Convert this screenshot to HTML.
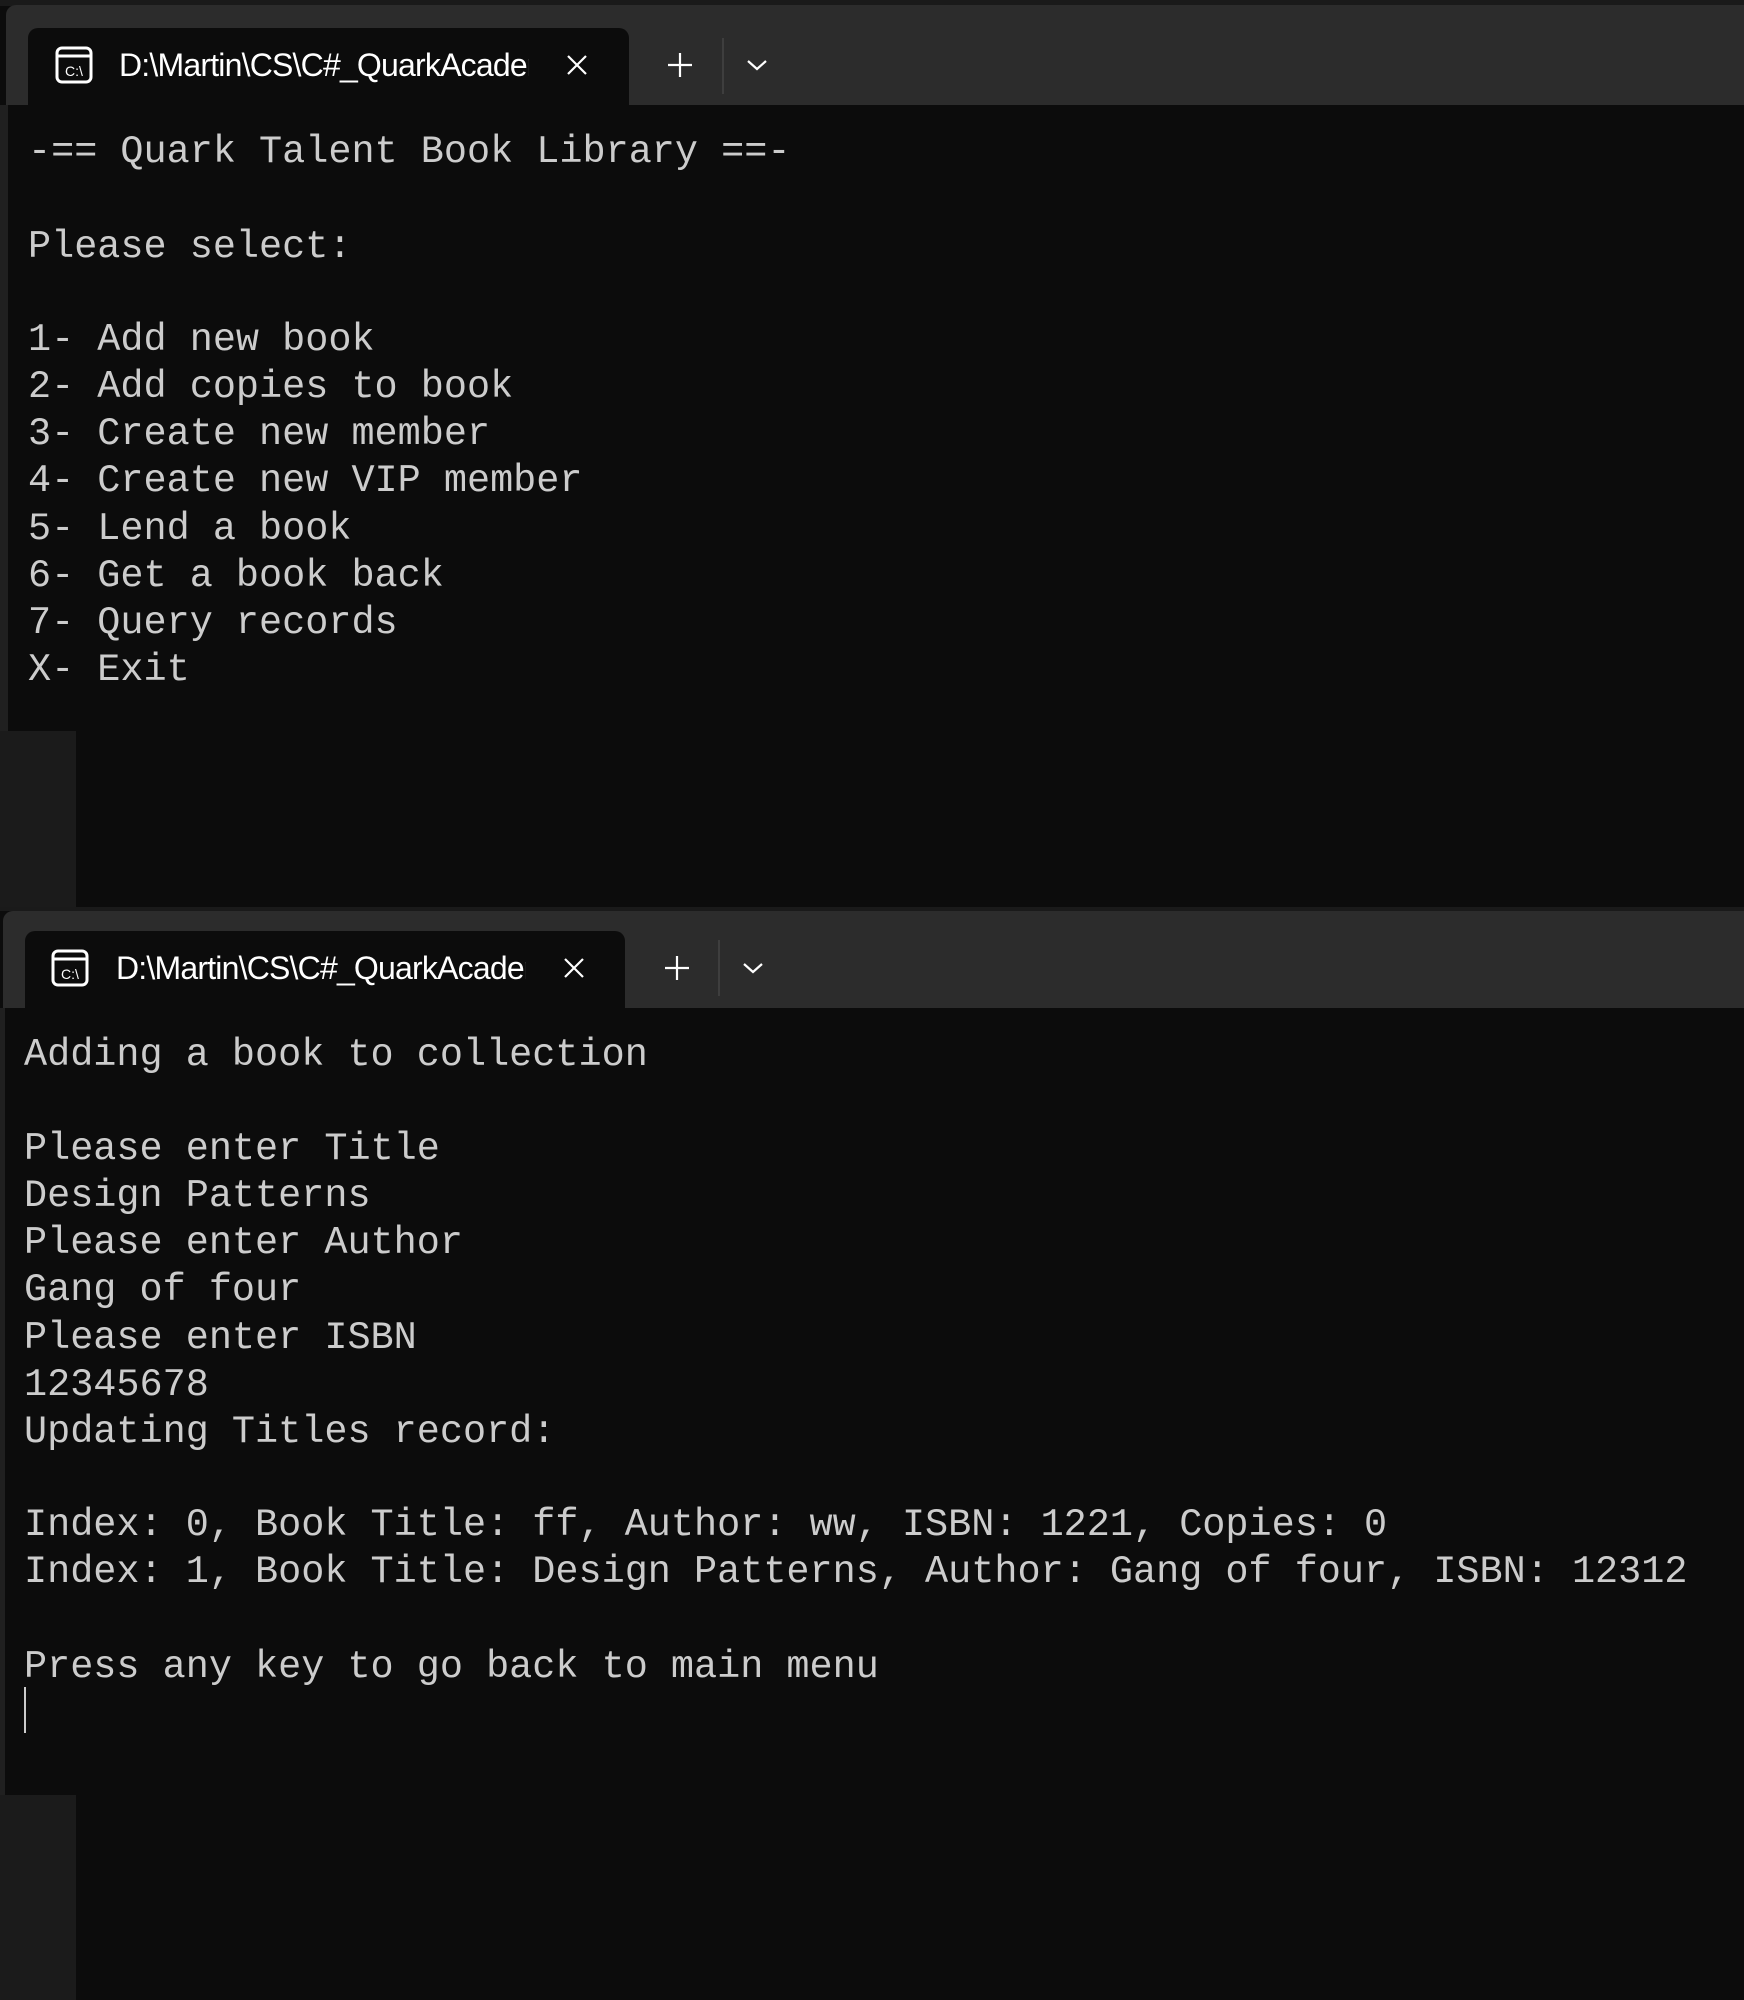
<!DOCTYPE html>
<html><head><style>
html,body{margin:0;padding:0;background:#0c0c0c;width:1744px;height:2000px;overflow:hidden;position:relative}
.abs{position:absolute}
.bar{position:absolute;left:6px;right:0;background:#2c2c2c;border-top-left-radius:10px}
.tab{position:absolute;background:#0c0c0c;border-top-left-radius:10px;border-top-right-radius:10px}
.tt{position:absolute;font-family:"Liberation Sans",sans-serif;font-size:32px;color:#fff;white-space:nowrap;letter-spacing:-0.8px}
.t{position:absolute;font-family:"Liberation Mono",monospace;font-size:38.5px;color:#cccccc;white-space:pre;line-height:47px;height:47px}
</style></head><body>
<!-- top window -->
<div class="abs" style="left:0;top:0;width:1744px;height:6px;background:#1a1a1a"></div>
<div class="bar" style="top:5px;height:100px"></div>
<div class="tab" style="left:28px;top:28px;width:601px;height:78px"></div>
<svg class="abs" style="left:55px;top:46px" width="38" height="38" viewBox="0 0 38 38"><rect x="2" y="2" width="34" height="34" rx="5" fill="none" stroke="#fff" stroke-width="3"/><line x1="2" y1="10" x2="36" y2="10" stroke="#fff" stroke-width="3"/><text x="19" y="30" font-family="Liberation Sans" font-size="14" fill="#fff" text-anchor="middle">C:\</text></svg>
<div class="tt" style="left:119px;top:47px;width:410px;overflow:hidden">D:\Martin\CS\C#_QuarkAcademy</div>
<svg class="abs" style="left:565px;top:53px" width="24" height="24"><path d="M3 3L21 21M21 3L3 21" stroke="#fff" stroke-width="2.2"/></svg>
<svg class="abs" style="left:667px;top:52px" width="26" height="26"><path d="M13 1V25M1 13H25" stroke="#fff" stroke-width="2.2"/></svg>
<div class="abs" style="left:722px;top:38px;width:2px;height:56px;background:#3e3e3e"></div>
<svg class="abs" style="left:746px;top:58px" width="22" height="14"><path d="M2 3L11 11L20 3" stroke="#fff" stroke-width="2.2" fill="none"/></svg>
<div class="abs" style="left:0;top:105px;width:8px;height:626px;background:#202020"></div>
<div class="abs" style="left:0;top:731px;width:76px;height:178px;background:#1b1b1b"></div>
<div class="t" style="left:28px;top:129px">-== Quark Talent Book Library ==-</div>
<div class="t" style="left:28px;top:224px">Please select:</div>
<div class="t" style="left:28px;top:317px">1- Add new book</div>
<div class="t" style="left:28px;top:364px">2- Add copies to book</div>
<div class="t" style="left:28px;top:411px">3- Create new member</div>
<div class="t" style="left:28px;top:458px">4- Create new VIP member</div>
<div class="t" style="left:28px;top:506px">5- Lend a book</div>
<div class="t" style="left:28px;top:553px">6- Get a book back</div>
<div class="t" style="left:28px;top:600px">7- Query records</div>
<div class="t" style="left:28px;top:647px">X- Exit</div>
<!-- bottom window -->
<div class="abs" style="left:0;top:907px;width:1744px;height:4px;background:#1a1a1a"></div>
<div class="bar" style="top:911px;height:97px;left:3px"></div>
<div class="tab" style="left:25px;top:931px;width:600px;height:78px"></div>
<svg class="abs" style="left:51px;top:949px" width="38" height="38" viewBox="0 0 38 38"><rect x="2" y="2" width="34" height="34" rx="5" fill="none" stroke="#fff" stroke-width="3"/><line x1="2" y1="10" x2="36" y2="10" stroke="#fff" stroke-width="3"/><text x="19" y="30" font-family="Liberation Sans" font-size="14" fill="#fff" text-anchor="middle">C:\</text></svg>
<div class="tt" style="left:116px;top:950px;width:410px;overflow:hidden">D:\Martin\CS\C#_QuarkAcademy</div>
<svg class="abs" style="left:562px;top:956px" width="24" height="24"><path d="M3 3L21 21M21 3L3 21" stroke="#fff" stroke-width="2.2"/></svg>
<svg class="abs" style="left:664px;top:955px" width="26" height="26"><path d="M13 1V25M1 13H25" stroke="#fff" stroke-width="2.2"/></svg>
<div class="abs" style="left:718px;top:940px;width:2px;height:56px;background:#3e3e3e"></div>
<svg class="abs" style="left:742px;top:961px" width="22" height="14"><path d="M2 3L11 11L20 3" stroke="#fff" stroke-width="2.2" fill="none"/></svg>
<div class="abs" style="left:0;top:1008px;width:5px;height:787px;background:#202020"></div>
<div class="abs" style="left:0;top:1795px;width:76px;height:205px;background:#1b1b1b"></div>
<div class="t" style="left:24px;top:1032px">Adding a book to collection</div>
<div class="t" style="left:24px;top:1126px">Please enter Title</div>
<div class="t" style="left:24px;top:1173px">Design Patterns</div>
<div class="t" style="left:24px;top:1220px">Please enter Author</div>
<div class="t" style="left:24px;top:1267px">Gang of four</div>
<div class="t" style="left:24px;top:1315px">Please enter ISBN</div>
<div class="t" style="left:24px;top:1362px">12345678</div>
<div class="t" style="left:24px;top:1409px">Updating Titles record:</div>
<div class="t" style="left:24px;top:1502px">Index: 0, Book Title: ff, Author: ww, ISBN: 1221, Copies: 0</div>
<div class="t" style="left:24px;top:1549px;width:1720px;overflow:hidden">Index: 1, Book Title: Design Patterns, Author: Gang of four, ISBN: 12312</div>
<div class="t" style="left:24px;top:1644px">Press any key to go back to main menu</div>
<div class="abs" style="left:24px;top:1687px;width:2px;height:46px;background:#cccccc"></div>
</body></html>
